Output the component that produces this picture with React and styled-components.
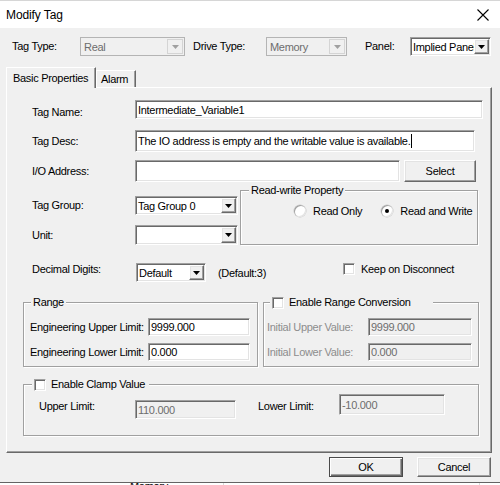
import styled, { createGlobalStyle, css } from 'styled-components';

const GlobalStyle = createGlobalStyle`
    html, body {
        margin: 0;
        padding: 0;
        background: #fff;
    }
    body {
        color: #000;
        font-family: 'Liberation Sans', Arial, sans-serif;
        font-size: 11px;
        letter-spacing: -0.3px;
    }
    * {
        box-sizing: border-box;
    }
`

const sunken = css`
    border-bottom: 1px solid #fff;
    border-left: 1px solid #a0a0a0;
    border-right: 1px solid #fff;
    border-top: 1px solid #a0a0a0;
    box-shadow: inset 1px 1px 0 #696969, inset -1px -1px 0 #e3e3e3;
`

const raised = css`
    border-bottom: 1px solid #696969;
    border-left: 1px solid #fff;
    border-right: 1px solid #696969;
    border-top: 1px solid #fff;
    box-shadow: inset -1px -1px 0 #a0a0a0, inset 1px 1px 0 #e3e3e3;
`

const Window = styled.div`
    background: #f0f0f0;
    display: flex;
    flex-direction: column;
    height: 485px;
    overflow: hidden;
    width: 500px;
`

const TitleBar = styled.div`
    align-items: center;
    background: #fff;
    border-top: 1px solid #d6d6d6;
    display: flex;
    flex-shrink: 0;
    height: 28px;
    justify-content: space-between;
    padding: 0 11px 0 6px;
`

const Title = styled.span`
    font-size: 12px;
    letter-spacing: -0.1px;
`

const TopRow = styled.div`
    align-items: center;
    display: flex;
    flex-shrink: 0;
    height: 19px;
    margin-top: 9px;
    padding-left: 12px;
`

const Label = styled.span`
    align-self: ${p => p.$top !== undefined ? 'flex-start' : 'center'};
    color: ${p => p.$disabled ? '#8d8d8d' : '#000'};
    flex-shrink: 0;
    line-height: 13px;
    margin-left: ${p => p.$ml || 0}px;
    margin-top: ${p => p.$top || 0}px;
    white-space: nowrap;
    width: ${p => p.$w}px;
`

const ComboBox = styled.div`
    background: ${p => p.$disabled ? '#f0f0f0' : '#fff'};
    display: flex;
    flex-shrink: 0;
    height: ${p => p.$h || 19}px;
    width: ${p => p.$w}px;
    ${p => p.$disabled ? css`border: 1px solid #b4b4b4;` : sunken}
`

const ComboText = styled.span`
    align-items: center;
    color: ${p => p.$disabled ? '#6d6d6d' : '#000'};
    display: flex;
    flex: 1;
    overflow: hidden;
    padding-left: ${p => p.$disabled ? 3 : 2}px;
    white-space: nowrap;
`

const ComboArrow = styled.span`
    align-items: center;
    background: #f0f0f0;
    display: flex;
    flex-shrink: 0;
    justify-content: center;
    margin: ${p => p.$disabled ? '1px' : '1px 1px 1px 0'};
    width: ${p => p.$disabled ? 16 : 15}px;
    ${p => p.$disabled ? css`border: 1px solid #d4d4d4;` : raised}
`

const TabBar = styled.div`
    align-items: flex-end;
    display: flex;
    flex-shrink: 0;
    height: 20px;
    margin-top: 11px;
    padding-left: 6px;
    position: relative;
    z-index: 1;
`

const Tab = styled.div`
    align-items: center;
    background: #f0f0f0;
    border-left: 1px solid #fff;
    border-right: 1px solid #696969;
    border-top: 1px solid #fff;
    box-shadow: inset -1px 0 0 #a0a0a0;
    display: flex;
    height: ${p => p.$active ? 21 : 17}px;
    margin-bottom: ${p => p.$active ? -1 : 0}px;
    padding: ${p => p.$active ? '0 6px 1px' : '0 4px'};
    width: ${p => p.$w}px;
`

const Panel = styled.div`
    border-bottom: 1px solid #696969;
    border-left: 1px solid #fff;
    border-right: 1px solid #696969;
    border-top: 1px solid #fff;
    box-shadow: inset -1px -1px 0 #a0a0a0;
    display: flex;
    flex-direction: column;
    flex-shrink: 0;
    height: 366px;
    margin-left: 6px;
    padding: 12px 0 0 16px;
    width: 486px;
`

const FieldRow = styled.div`
    align-items: ${p => p.$align || 'center'};
    display: flex;
    flex-shrink: 0;
    height: ${p => p.$h}px;
    margin-top: ${p => p.$mt || 0}px;
`

const TextBox = styled.div`
    align-items: center;
    background: ${p => p.$disabled ? '#f0f0f0' : '#fff'};
    color: ${p => p.$disabled ? '#6d6d6d' : '#000'};
    display: flex;
    flex-shrink: 0;
    height: ${p => p.$h || 19}px;
    margin-left: ${p => p.$ml || 0}px;
    margin-top: ${p => p.$mt || 0}px;
    overflow: hidden;
    padding-left: 2px;
    white-space: nowrap;
    width: ${p => p.$w}px;
    ${sunken}
`

const Caret = styled.span`
    background: #000;
    display: inline-block;
    height: 14px;
    margin-left: 1px;
    width: 1px;
`

const Button = styled.button`
    align-items: center;
    background: #f0f0f0;
    color: #000;
    display: flex;
    flex-shrink: 0;
    font: inherit;
    height: ${p => p.$h || 20}px;
    justify-content: center;
    letter-spacing: inherit;
    margin-left: ${p => p.$ml || 0}px;
    padding: 0;
    width: ${p => p.$w}px;
    ${p => p.$default
        ? css`
            border: 1px solid #4a4a4a;
            box-shadow: inset 1px 1px 0 #fff, inset -1px -1px 0 #696969, inset -2px -2px 0 #a0a0a0;
        `
        : raised}
`

const LeftCol = styled.div`
    display: flex;
    flex-direction: column;
    flex-shrink: 0;
    width: 215px;
`

const GroupBox = styled.div`
    border: 1px solid #a0a0a0;
    box-shadow: inset 1px 1px 0 #fff, 1px 1px 0 #fff;
    flex-shrink: 0;
    height: ${p => p.$h}px;
    margin-left: ${p => p.$ml || 0}px;
    position: relative;
    width: ${p => p.$w}px;
`

const Caption = styled.div`
    align-items: center;
    background: #f0f0f0;
    display: flex;
    gap: 5px;
    left: ${p => p.$l}px;
    line-height: 13px;
    padding: 0 ${p => p.$pr || 2}px 0 2px;
    position: absolute;
    top: -7px;
`

const RadioRow = styled.div`
    display: flex;
    gap: 19px;
    padding: 14px 0 0 53px;
`

const RadioOption = styled.label`
    align-items: center;
    display: flex;
    gap: 7px;
`

const Radio = styled.span`
    align-items: center;
    background: #fff;
    border-radius: 50%;
    box-shadow: inset 1px 1px 0 #a0a0a0, inset -1px -1px 0 #e3e3e3, 0 0 0 0.5px #c8c8c8;
    display: flex;
    height: 12px;
    justify-content: center;
    width: 12px;
    &::after {
        background: ${p => p.$checked ? '#000' : 'transparent'};
        border-radius: 50%;
        content: '';
        height: 4px;
        width: 4px;
    }
`

const CheckBox = styled.span`
    background: #fff;
    display: inline-block;
    flex-shrink: 0;
    height: 12px;
    width: 12px;
    ${sunken}
`

const CheckField = styled.label`
    align-items: center;
    align-self: flex-start;
    display: flex;
    gap: 6px;
`

const Note = styled.span`
    flex-shrink: 0;
    margin-left: 12px;
    width: 125px;
`

const GroupRows = styled.div`
    display: flex;
    flex-direction: column;
    gap: 7px;
    padding: 15px 0 0 ${p => p.$pl}px;
`

const GroupRow = styled.div`
    align-items: center;
    display: flex;
    height: 18px;
`

const ClampRow = styled.div`
    align-items: flex-start;
    display: flex;
    padding: 9px 0 0 15px;
`

const Footer = styled.div`
    display: flex;
    flex-shrink: 0;
    gap: 14px;
    height: 20px;
    justify-content: flex-end;
    margin-top: 4px;
    padding-right: 9px;
`

const BackStrip = styled.div`
    background: #fff;
    border-top: 1px solid #646464;
    display: flex;
    flex-shrink: 0;
    height: 3px;
    margin-top: auto;
    overflow: hidden;
`

const BackCell = styled.div`
    border-right: 1px solid #d9d9d9;
    color: #000;
    line-height: 6px;
    padding-left: ${p => p.$pl || 0}px;
    width: ${p => p.$w}px;
`

function Arrow({ disabled }) {
    return (
        <svg width="7" height="4" viewBox="0 0 7 4">
            <path d="M0 0H7L3.5 4Z" fill={disabled ? '#a0a0a0' : '#000'} />
        </svg>
    )
}

function Combo({ w, h, value, disabled }) {
    return (
        <ComboBox $w={w} $h={h} $disabled={disabled}>
            <ComboText $disabled={disabled}>{value}</ComboText>
            <ComboArrow $disabled={disabled}>
                <Arrow disabled={disabled} />
            </ComboArrow>
        </ComboBox>
    )
}

export default function App() {
    return (
        <>
            <GlobalStyle />
            <Window>
                <TitleBar>
                    <Title>Modify Tag</Title>
                    <svg width="12" height="12" viewBox="0 0 12 12">
                        <path d="M0.5 0.5L11.5 11.5M11.5 0.5L0.5 11.5" stroke="#000" strokeWidth="1.1" />
                    </svg>
                </TitleBar>

                <TopRow>
                    <Label $w={68}>Tag Type:</Label>
                    <Combo w={105} value="Real" disabled />
                    <Label $w={73} $ml={8}>Drive Type:</Label>
                    <Combo w={81} value="Memory" disabled />
                    <Label $w={45} $ml={18}>Panel:</Label>
                    <Combo w={81} value="Implied Panel" />
                </TopRow>

                <TabBar>
                    <Tab $active $w={90}>Basic Properties</Tab>
                    <Tab $w={40}>Alarm</Tab>
                </TabBar>

                <Panel>
                    <FieldRow $h={19}>
                        <Label $ml={9} $w={103} $top={6}>Tag Name:</Label>
                        <TextBox $w={348}>Intermediate_Variable1</TextBox>
                    </FieldRow>
                    <FieldRow $h={22} $mt={11}>
                        <Label $ml={9} $w={103}>Tag Desc:</Label>
                        <TextBox $w={340} $h={22}>
                            The IO address is empty and the writable value is available.<Caret />
                        </TextBox>
                    </FieldRow>
                    <FieldRow $h={22} $mt={8}>
                        <Label $ml={9} $w={103}>I/O Address:</Label>
                        <TextBox $w={265} $h={22} />
                        <Button $w={72} $h={22} $ml={4}>Select</Button>
                    </FieldRow>
                    <FieldRow $h={55} $mt={8} $align="stretch">
                        <LeftCol>
                            <FieldRow $h={19} $mt={6}>
                                <Label $ml={9} $w={103}>Tag Group:</Label>
                                <Combo w={103} value="Tag Group 0" />
                            </FieldRow>
                            <FieldRow $h={20} $mt={10}>
                                <Label $ml={9} $w={103}>Unit:</Label>
                                <Combo w={103} h={20} value="" />
                            </FieldRow>
                        </LeftCol>
                        <GroupBox $w={238} $h={55} $ml={2}>
                            <Caption $l={8}>Read-write Property</Caption>
                            <RadioRow>
                                <RadioOption><Radio />Read Only</RadioOption>
                                <RadioOption><Radio $checked />Read and Write</RadioOption>
                            </RadioRow>
                        </GroupBox>
                    </FieldRow>
                    <FieldRow $h={19} $mt={18}>
                        <Label $ml={9} $w={104} $top={0}>Decimal Digits:</Label>
                        <Combo w={70} value="Default" />
                        <Note>(Default:3)</Note>
                        <CheckField><CheckBox />Keep on Disconnect</CheckField>
                    </FieldRow>
                    <FieldRow $h={65} $mt={20} $align="stretch">
                        <GroupBox $w={235} $h={65}>
                            <Caption $l={7}>Range</Caption>
                            <GroupRows $pl={6}>
                                <GroupRow>
                                    <Label $w={118}>Engineering Upper Limit:</Label>
                                    <TextBox $w={102} $h={18}>9999.000</TextBox>
                                </GroupRow>
                                <GroupRow>
                                    <Label $w={118}>Engineering Lower Limit:</Label>
                                    <TextBox $w={102} $h={18}>0.000</TextBox>
                                </GroupRow>
                            </GroupRows>
                        </GroupBox>
                        <GroupBox $w={216} $h={65} $ml={5}>
                            <Caption $l={6} $pr={22}><CheckBox />Enable Range Conversion</Caption>
                            <GroupRows $pl={3}>
                                <GroupRow>
                                    <Label $w={101} $disabled>Initial Upper Value:</Label>
                                    <TextBox $w={104} $h={18} $disabled>9999.000</TextBox>
                                </GroupRow>
                                <GroupRow>
                                    <Label $w={101} $disabled>Initial Lower Value:</Label>
                                    <TextBox $w={104} $h={18} $disabled>0.000</TextBox>
                                </GroupRow>
                            </GroupRows>
                        </GroupBox>
                    </FieldRow>
                    <FieldRow $h={52} $mt={17} $align="stretch">
                        <GroupBox $w={456} $h={52}>
                            <Caption $l={8} $pr={4}><CheckBox />Enable Clamp Value</Caption>
                            <ClampRow>
                                <Label $w={96} $top={6}>Upper Limit:</Label>
                                <TextBox $w={101} $mt={6} $disabled>110.000</TextBox>
                                <Label $w={81} $ml={22} $top={6}>Lower Limit:</Label>
                                <TextBox $w={106} $h={21} $disabled>-10.000</TextBox>
                            </ClampRow>
                        </GroupBox>
                    </FieldRow>
                </Panel>

                <Footer>
                    <Button $w={74} $default>OK</Button>
                    <Button $w={74}>Cancel</Button>
                </Footer>

                <BackStrip>
                    <BackCell $w={224} $pl={130}>Memory</BackCell>
                    <BackCell $w={256} />
                </BackStrip>
            </Window>
        </>
    )
}
